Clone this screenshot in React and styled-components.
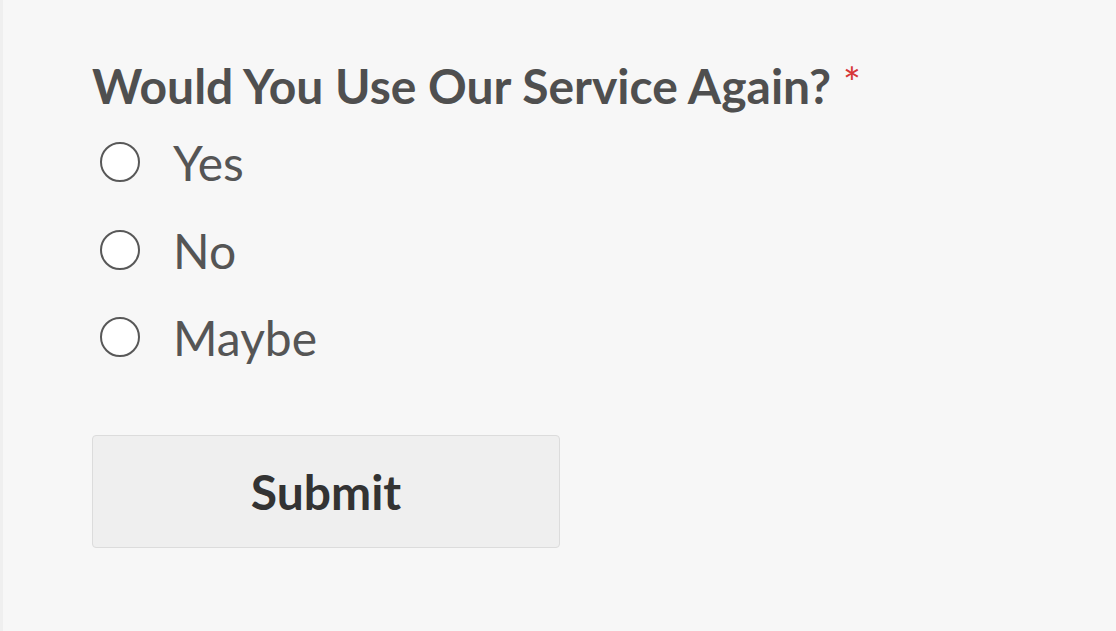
import React from 'react';
import styled, { createGlobalStyle } from 'styled-components';

const GlobalStyle = createGlobalStyle`
  html, body {
    margin: 0;
    padding: 0;
    background: #f7f7f7;
  }
  body {
    font-family: Lato, "Open Sans", sans-serif;
  }
`;

const StyledPage = styled.div`
  width: 1116px;
  height: 631px;
  box-sizing: border-box;
  background: #f7f7f7;
  border-left: 3px solid #efefef;
  padding: 52px 0 0 89px;
`;

const StyledForm = styled.form`
  display: flex;
  flex-direction: column;
  align-items: flex-start;
`;

const StyledLegend = styled.div`
  font-size: 48px;
  font-weight: 700;
  color: #4f4f4f;
  line-height: 60px;
  white-space: nowrap;
`;

const StyledRequired = styled.span`
  color: #d63637;
  font-weight: 400;
  margin-left: 12px;
  vertical-align: 6px;
  font-size: 42px;
`;

const StyledOptions = styled.div`
  display: flex;
  flex-direction: column;
  gap: 47.5px;
  margin-top: 26px;
  padding-left: 8px;
`;

const StyledOption = styled.label`
  display: flex;
  align-items: center;
  gap: 33px;
  height: 40px;
  line-height: 40px;
  font-size: 48px;
  color: #555555;
  cursor: pointer;
`;

const StyledText = styled.span`
  margin-top: 2px;
`;

const StyledRadio = styled.span`
  width: 36px;
  height: 36px;
  border: 2px solid #585858;
  border-radius: 50%;
  background: #ffffff;
  flex-shrink: 0;
`;

const StyledButton = styled.button`
  margin-top: 78px;
  width: 468px;
  height: 113px;
  background: #efefef;
  border: 1px solid #dcdcdc;
  border-radius: 4px;
  font-family: Lato, sans-serif;
  font-size: 48px;
  font-weight: 700;
  color: #333333;
  cursor: pointer;
`;

const options = ['Yes', 'No', 'Maybe'];

const App = () => (
  <StyledPage>
    <GlobalStyle />
    <StyledForm onSubmit={(e) => e.preventDefault()}>
      <StyledLegend>
        Would You Use Our Service Again?
        <StyledRequired>*</StyledRequired>
      </StyledLegend>
      <StyledOptions>
        {options.map((option) => (
          <StyledOption key={option}>
            <StyledRadio />
            <StyledText>{option}</StyledText>
          </StyledOption>
        ))}
      </StyledOptions>
      <StyledButton type="submit">Submit</StyledButton>
    </StyledForm>
  </StyledPage>
);

export default App;
